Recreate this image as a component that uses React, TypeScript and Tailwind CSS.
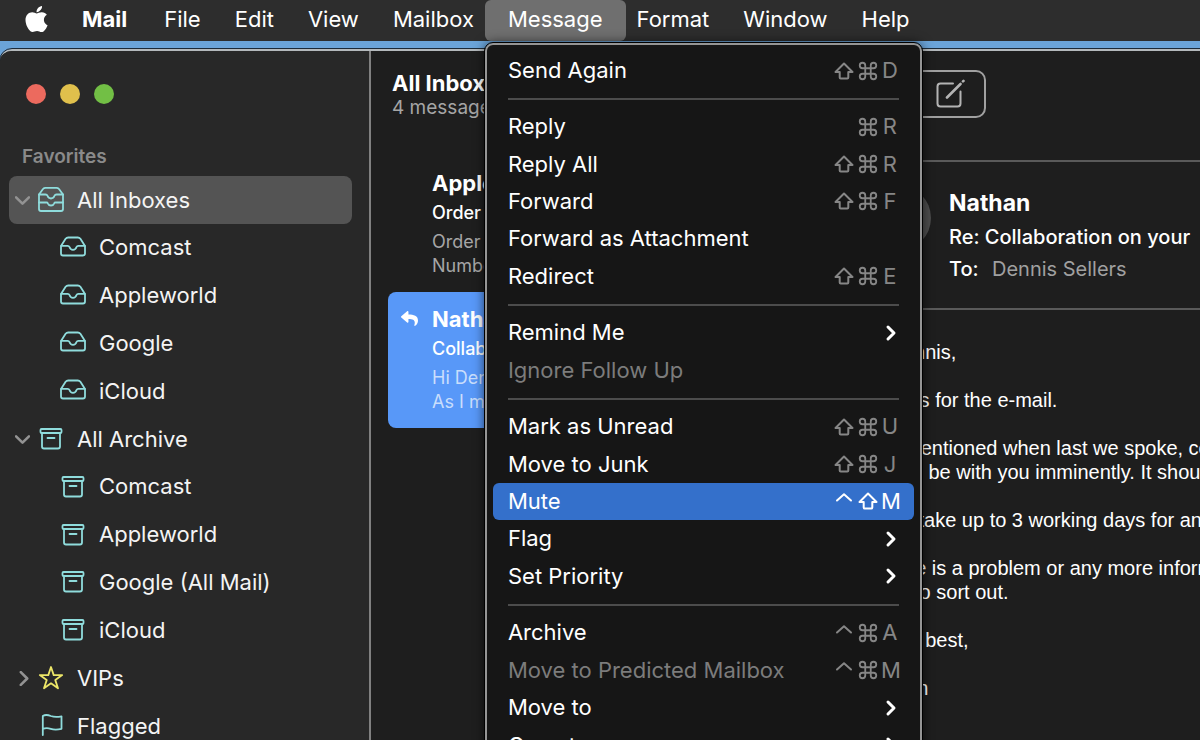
import type { ReactNode } from "react";
import { FaApple, FaReply } from "react-icons/fa";
import { ChevronDown, ChevronRight, Command } from "lucide-react";

type Key = "shift" | "cmd" | "ctrl";

type MenuEntry = {
  label: string;
  keys?: Key[];
  letter?: string;
  submenu?: boolean;
  disabled?: boolean;
  active?: boolean;
};

const menuGroups: { height: string; entries: MenuEntry[] }[] = [
  {
    height: "h-[37px]",
    entries: [{ label: "Send Again", keys: ["shift", "cmd"], letter: "D" }],
  },
  {
    height: "h-[187px]",
    entries: [
      { label: "Reply", keys: ["cmd"], letter: "R" },
      { label: "Reply All", keys: ["shift", "cmd"], letter: "R" },
      { label: "Forward", keys: ["shift", "cmd"], letter: "F" },
      { label: "Forward as Attachment" },
      { label: "Redirect", keys: ["shift", "cmd"], letter: "E" },
    ],
  },
  {
    height: "h-[75px]",
    entries: [
      { label: "Remind Me", submenu: true },
      { label: "Ignore Follow Up", disabled: true },
    ],
  },
  {
    height: "h-[187px]",
    entries: [
      { label: "Mark as Unread", keys: ["shift", "cmd"], letter: "U" },
      { label: "Move to Junk", keys: ["shift", "cmd"], letter: "J" },
      { label: "Mute", keys: ["ctrl", "shift"], letter: "M", active: true },
      { label: "Flag", submenu: true },
      { label: "Set Priority", submenu: true },
    ],
  },
  {
    height: "h-[150px]",
    entries: [
      { label: "Archive", keys: ["ctrl", "cmd"], letter: "A" },
      { label: "Move to Predicted Mailbox", keys: ["ctrl", "cmd"], letter: "M", disabled: true },
      { label: "Move to", submenu: true },
      { label: "Copy to", submenu: true },
    ],
  },
];

function KeyGlyph({ name }: { name: Key }) {
  if (name === "cmd") return <Command className="h-[22px] w-[22px]" strokeWidth={2} />;
  return (
    <svg
      viewBox="0 0 22 22"
      className="h-[22px] w-[22px]"
      fill="none"
      stroke="currentColor"
      strokeWidth="2"
      strokeLinejoin="round"
      strokeLinecap="round"
    >
      {name === "shift" ? (
        <path d="M11 3.500 2.500 12h4.200v5.500q0 1 1 1h6.600q1 0 1-1V12h4.200z" />
      ) : (
        <path d="m4 10.500 7-6.300 7 6.300" />
      )}
    </svg>
  );
}

function MenuRow({ entry }: { entry: MenuEntry }) {
  const tone = entry.active
    ? "bg-[#3470cb] text-white"
    : entry.disabled
      ? "text-[#7c7c7c]"
      : "text-white";
  return (
    <button
      role="menuitem"
      disabled={entry.disabled}
      className={`flex w-full items-center justify-between rounded-md px-[15px] text-left ${tone}`}
    >
      <span>{entry.label}</span>
      {entry.submenu && <ChevronRight className="h-6 w-4 text-white" viewBox="4 0 16 24" strokeWidth={3} />}
      {entry.keys && (
        <span className={`flex items-center gap-0.5 ${entry.active ? "text-white" : "text-[#868686]"}`}>
          {entry.keys.map((k) => (
            <KeyGlyph key={k} name={k} />
          ))}
          <span className="w-[18px] text-center">{entry.letter}</span>
        </span>
      )}
    </button>
  );
}

function MessageMenu() {
  return (
    <div
      role="menu"
      className="absolute top-full left-0 z-10 mt-0.5 w-[437px] rounded-lg border-2 border-[#959595] bg-[#161616] px-1.5 pt-[7px] text-[22px] shadow-[0_0_12px_rgba(0,0,0,0.7)] outline-1 outline-black"
    >
      {menuGroups.map((group, i) => (
        <div key={i}>
          {i > 0 && (
            <div className="flex h-[19px] items-center px-[15px]">
              <hr className="w-full border-t-2 border-[#4c4c4c]" />
            </div>
          )}
          <div className={`grid auto-rows-fr ${group.height}`}>
            {group.entries.map((e) => (
              <MenuRow key={e.label} entry={e} />
            ))}
          </div>
        </div>
      ))}
    </div>
  );
}

function MenuBar() {
  return (
    <nav className="relative z-10 flex h-[41px] shrink-0 items-stretch bg-[#2d2d2d] pl-[23px] text-[22px] text-white">
      <button aria-label="Apple menu" className="pr-[17px] pb-1">
        <FaApple className="h-[30px] w-[27px]" />
      </button>
      <button className="pr-5 pb-0.5 pl-[15px] font-bold">Mail</button>
      {["File", "Edit", "View", "Mailbox"].map((m) => (
        <button key={m} className="px-[17px] pb-0.5">
          {m}
        </button>
      ))}
      <div className="relative -mr-1.5 -ml-1.5 flex">
        <button className="rounded-md bg-[#6f6f6f] px-[23px] pb-0.5">Message</button>
        <MessageMenu />
      </div>
      {["Format", "Window", "Help"].map((m) => (
        <button key={m} className="px-[17px] pb-0.5">
          {m}
        </button>
      ))}
    </nav>
  );
}

function Icon({ children, color = "#8fdcdc" }: { children: ReactNode; color?: string }) {
  return (
    <svg
      viewBox="0 0 26 26"
      className="h-[26px] w-[26px] shrink-0"
      fill="none"
      stroke={color}
      strokeWidth="1.8"
      strokeLinejoin="round"
      strokeLinecap="round"
    >
      {children}
    </svg>
  );
}

const TraysIcon = () => (
  <Icon>
    <path d="M1 7.500 5 2Q6 .9 7.500.9h11Q20 .9 21 2l4 5.500v14.500q0 2-2 2H3q-2 0-2-2z" />
    <path d="M1 7.500h6.500q1.500 0 2 1.300.9 2.700 3.500 2.700t3.500-2.700q.5-1.300 2-1.300H25M1 15.500h7.500q1 0 1.300.8.9 2.200 3.200 2.200t3.200-2.200q.3-.8 1.300-.8H25" />
  </Icon>
);

const TrayIcon = () => (
  <Icon>
    <path d="M1 11 5.600 3.800Q6.600 2.500 8.200 2.500h9.600q1.600 0 2.600 1.300L25 11v7.500q0 2-2 2H3q-2 0-2-2z" />
    <path d="M1.200 10.800h6.500q1.300 0 1.800 1.200.9 2.800 3.500 2.800t3.500-2.800q.5-1.200 1.800-1.200h6.500" />
  </Icon>
);

const ArchiveIcon = () => (
  <Icon>
    <rect x="2.500" y="3" width="21" height="4" rx="1" />
    <path d="M4 7v13.500q0 2 2 2h14q2 0 2-2V7M9.500 12h7" />
  </Icon>
);

const StarIcon = () => (
  <Icon color="#ece668">
    <path d="m13 2 2.700 8.100h8.500l-6.900 5 2.700 8.200-7-5-7 5 2.700-8.200-6.900-5h8.500z" />
  </Icon>
);

const FlagIcon = () => (
  <Icon>
    <path d="M4.800 22V3q3.200-2 8 0 4.500 1.600 10.700.3v12.500q-6.200 1.500-10.700 0-4.500-1.600-8 .2" />
  </Icon>
);

type SidebarRowProps = {
  icon: ReactNode;
  label: string;
  chevron?: "open" | "closed";
  selected?: boolean;
  nested?: boolean;
};

function SidebarRow({ icon, label, chevron, selected, nested }: SidebarRowProps) {
  return (
    <a
      href="#"
      className={`flex items-center gap-[13px] rounded-lg ${nested ? "pl-[51px]" : "h-12 pl-1.5"} ${selected ? "bg-[#545454]" : ""}`}
    >
      {!nested && (
        <span className="-mr-[5px] w-[15px] shrink-0 text-[#939393]">
          {chevron === "open" && <ChevronDown className="h-[15px] w-[15px]" viewBox="5 5 14 14" strokeWidth={2.4} />}
          {chevron === "closed" && <ChevronRight className="h-[15px] w-[18px]" viewBox="5 5 14 14" strokeWidth={2.4} />}
        </span>
      )}
      {icon}
      <span>{label}</span>
    </a>
  );
}

function Sidebar() {
  return (
    <aside className="w-[371px] shrink-0 overflow-hidden border-r-2 border-[#808080] bg-[#282828] text-[22px] text-[#f4f4f4]">
      <div className="flex gap-3.5 px-[26px] pt-[33px]">
        <button aria-label="Close" className="size-5 rounded-full bg-[#ec6a5e]" />
        <button aria-label="Minimize" className="size-5 rounded-full bg-[#e0c04c]" />
        <button aria-label="Zoom" className="size-5 rounded-full bg-[#72bf45]" />
      </div>
      <h2 className="mt-[38px] pl-[22px] text-[19px] leading-[30px] font-semibold text-[#8a8a8a]">Favorites</h2>
      <nav className="mt-1 pr-[17px] pl-[9px]">
        <SidebarRow icon={<TraysIcon />} label="All Inboxes" chevron="open" selected />
        <div className="grid h-[191px] grid-rows-4">
          {["Comcast", "Appleworld", "Google", "iCloud"].map((name) => (
            <SidebarRow key={name} icon={<TrayIcon />} label={name} nested />
          ))}
        </div>
        <SidebarRow icon={<ArchiveIcon />} label="All Archive" chevron="open" />
        <div className="grid h-[191px] grid-rows-4">
          {["Comcast", "Appleworld", "Google (All Mail)", "iCloud"].map((name) => (
            <SidebarRow key={name} icon={<ArchiveIcon />} label={name} nested />
          ))}
        </div>
        <SidebarRow icon={<StarIcon />} label="VIPs" chevron="closed" />
        <SidebarRow icon={<FlagIcon />} label="Flagged" />
      </nav>
    </aside>
  );
}

type MessageProps = {
  from: string;
  subject: string;
  preview: string[];
  selected?: boolean;
};

function MessageItem({ from, subject, preview, selected }: MessageProps) {
  return (
    <li className={`flex h-[136px] rounded-lg pt-3 ${selected ? "bg-[#5898f8]" : ""}`}>
      <div className="w-11 shrink-0 pt-1.5 pl-[13px] text-white">
        {selected && <FaReply className="h-[17px] w-[17px]" />}
      </div>
      <div className="overflow-hidden whitespace-nowrap">
        <p className="text-[22px] leading-[30px] font-bold text-white">{from}</p>
        <p className="text-[18px] leading-[30px] font-medium text-white">{subject}</p>
        <div className={`mt-0.5 text-[18px] leading-6 ${selected ? "text-[#c9defc]" : "text-[#a6a6a6]"}`}>
          {preview.map((line) => (
            <p key={line}>{line}</p>
          ))}
        </div>
      </div>
    </li>
  );
}

function MessageList() {
  return (
    <section className="w-[469px] shrink-0 overflow-hidden bg-[#1e1e1e]">
      <header className="h-[105px] pt-[18px] pl-[21px]">
        <h1 className="text-[22px] leading-7 font-bold text-white">All Inboxes</h1>
        <p className="text-[19px] leading-[22px] text-[#a6a6a6]">4 messages</p>
      </header>
      <ul className="px-[17px]">
        <MessageItem from="Apple" subject="Order confirmation" preview={["Order", "Number"]} />
        <MessageItem
          from="Nathan"
          subject="Collaboration"
          preview={["Hi Dennis,", "As I mentioned"]}
          selected
        />
      </ul>
    </section>
  );
}

const paragraphs = [
  ["Hi Dennis,"],
  ["Thanks for the e-mail."],
  ["As I mentioned when last we spoke, contracts", "should be with you imminently. It should be"],
  ["It can take up to 3 working days for an answer"],
  ["If there is a problem or any more information", "need to sort out."],
  ["All the best,"],
  ["Nathan"],
];

function Reader() {
  return (
    <main className="min-w-0 flex-1 overflow-hidden bg-[#1e1e1e] whitespace-nowrap">
      <div className="flex h-[111px] items-start border-b-2 border-[#5a5a5a] pt-[19px]">
        <button
          aria-label="Compose"
          className="flex h-12 w-[146px] items-center justify-end rounded-[10px] border-2 border-[#a0a0a0] pr-[19px] text-[#b4b4b4]"
        >
          <svg viewBox="0 0 30 30" className="h-[30px] w-[30px]" fill="none" stroke="currentColor" strokeWidth="2" strokeLinecap="round">
            <path d="M18 4.500H5.500q-3 0-3 3v17q0 3 3 3h17q3 0 3-3V12.500" />
            <path d="M12 18.500 25.500 5M28 2.400l.5-.5" strokeWidth="2.600" />
          </svg>
        </button>
      </div>
      <header className="flex h-[148px] gap-[18px] border-b-2 border-[#5a5a5a] pt-[23px] pl-[25px]">
        <div className="size-[66px] shrink-0 rounded-full bg-[#4d4d4d]" />
        <div className="text-[20px] leading-8 font-medium text-white">
          <h2 className="text-[23px] leading-9 font-bold">Nathan</h2>
          <p>Re: Collaboration on your</p>
          <p>
            To: <span className="ml-2 font-normal text-[#a0a0a0]">Dennis Sellers</span>
          </p>
        </div>
      </header>
      <article className="space-y-6 pt-[30px] pl-6 font-['Liberation_Sans',Arial,sans-serif] text-[20px] leading-6 text-white">
        {paragraphs.map((lines) => (
          <p key={lines[0]}>
            {lines.map((line) => (
              <span key={line} className="block">
                {line}
              </span>
            ))}
          </p>
        ))}
      </article>
    </main>
  );
}

export default function App() {
  return (
    <div className="flex h-screen flex-col overflow-hidden bg-[#6ba4d9] font-[Inter,sans-serif]">
      <MenuBar />
      <div className="mt-2 flex min-h-0 flex-1 overflow-hidden rounded-tl-xl border-t-2 border-[#b4b9bc] bg-[#1e1e1e] outline-1 outline-[#1c2a38]">
        <Sidebar />
        <MessageList />
        <Reader />
      </div>
    </div>
  );
}
